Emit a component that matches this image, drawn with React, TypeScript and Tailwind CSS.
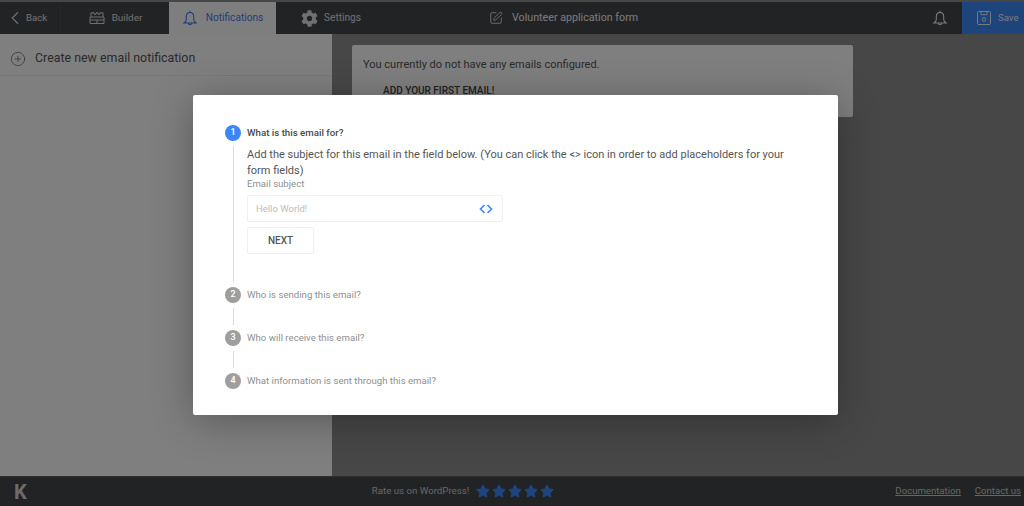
import { ChevronLeft, CirclePlus, SquarePen } from 'lucide-react';
import { FaCog, FaStar } from 'react-icons/fa';

function BuilderIcon() {
  return (
    <svg width="16" height="12" viewBox="0 0 16 12" fill="none" stroke="currentColor" strokeWidth="1">
      <path d="M1 5h14v6.5H1zM2 5V.8h3v1.4h2V.8h2v1.4h2V.8h3V5M1 8h14M8 8v3.5" />
    </svg>
  );
}

function BellIcon() {
  return (
    <svg width="14" height="16" viewBox="0 0 14 16" fill="none" stroke="currentColor" strokeWidth="1.1">
      <path d="M7 2.4c-2.6 0-3.7 2-3.7 4.4v2.6c0 1.6-1.3 2.8-2.4 3.6h12.2c-1.1-.8-2.4-2-2.4-3.6V6.8C10.7 4.4 9.6 2.4 7 2.4zM5.4 13.2a1.6 1.6 0 0 0 3.2 0M7 2.4V.8" />
    </svg>
  );
}

function SaveIcon() {
  return (
    <svg width="14" height="14" viewBox="0 0 14 14" fill="none" stroke="currentColor" strokeWidth="1">
      <path d="M1.5.5h11a1 1 0 0 1 1 1v11a1 1 0 0 1-1 1h-11a1 1 0 0 1-1-1v-11a1 1 0 0 1 1-1zM4 .5v3.2h6V.5" />
      <circle cx="7" cy="8.5" r="1.8" />
    </svg>
  );
}

function CodeIcon() {
  return (
    <svg width="14" height="10" viewBox="0 0 14 10" fill="none" stroke="currentColor" strokeWidth="1.6">
      <path d="M5.5 1 1.5 5l4 4M8.5 1l4 4-4 4" />
    </svg>
  );
}

function Step({ n, label, line }: { n: number; label: string; line?: boolean }) {
  return (
    <>
      <div className="flex items-center gap-[6px] h-[16px]">
        <div className="w-[16px] h-[16px] rounded-full bg-[#9e9e9e] text-white text-[9px] font-medium flex items-center justify-center">
          {n}
        </div>
        <span className="text-[9.65px] text-[#8f8f8f]">{label}</span>
      </div>
      {line && <div className="ml-[8px] w-px h-[17px] my-[5px] bg-[#dcdcdc]" />}
    </>
  );
}

export default function App() {
  return (
    <div className="relative w-[1024px] h-[506px] overflow-hidden flex flex-col bg-[#8e8e8e] font-['Roboto',sans-serif]">
      {/* Top bar */}
      <header className="h-[32px] mt-[2px] flex-shrink-0 bg-[#45474a] flex items-center relative">
        <div className="w-[61px] h-full flex items-center pl-[4px] text-[9.6px] text-[#e0e0e0] border-r border-[#4c4e51]">
          <ChevronLeft size={22} strokeWidth={1.2} />
          <span>Back</span>
        </div>
        <div className="w-[108px] h-full flex items-center justify-center gap-[7px] pl-[1px] text-[9.9px] text-[#e0e0e0]">
          <BuilderIcon />
          <span>Builder</span>
        </div>
        <div className="w-[107px] h-full bg-[#fdfdfd] flex justify-center items-center gap-[9px] pl-[1px] text-[10.15px] text-[#3f7ef0]">
          <BellIcon />
          <span>Notifications</span>
        </div>
        <div className="w-[108px] h-full flex items-center justify-center gap-[6px] pl-[2px] text-[10.1px] text-[#e0e0e0]">
          <FaCog size={17} />
          <span>Settings</span>
        </div>
        <div className="ml-[105px] flex items-center gap-[9px] text-[10.7px] text-[#f4f4f4]">
          <SquarePen size={14} strokeWidth={1.4} />
          <span>Volunteer application form</span>
        </div>
        <div className="ml-auto mr-[15px] text-[#f0f0f0]">
          <BellIcon />
        </div>
        <div className="w-[62px] h-full bg-[#3a8af8] flex items-center pl-[15px] gap-[7px] text-[9.6px] text-[#f0f4fa]">
          <SaveIcon />
          <span>Save</span>
        </div>
      </header>

      {/* Body */}
      <main className="flex-1 flex min-h-0">
        <aside className="w-[332px] bg-white">
          <div className="h-[42px] pt-[8px] border-b border-[#f0f0f0] flex items-center pl-[10px] gap-[9px] text-[#555] text-[12.4px]">
            <CirclePlus size={16} strokeWidth={1} />
            <span>Create new email notification</span>
          </div>
        </aside>
        <section className="flex-1 pl-[20px] pt-[11px]">
          <div className="w-[501px] h-[72px] rounded-[2px] bg-white pl-[11px] pt-[12px] text-[11px] text-[#555]">
            <p>You currently do not have any emails configured.</p>
            <p className="mt-[9px] ml-[20px] text-[10px] font-medium text-[#444]">ADD YOUR FIRST EMAIL!</p>
          </div>
        </section>
      </main>

      {/* Footer */}
      <footer className="h-[30px] flex-shrink-0 bg-[#45474a] border-t border-[#5a5a5a] flex items-center relative text-[9.7px] text-[#cccccc]">
        <span className="ml-[14px] text-[20px] font-bold leading-none text-[#d8d8d8]">K</span>
        <div className="ml-[345px] flex items-center">
          <span className="mr-[7px]">Rate us on WordPress!</span>
          <div className="flex gap-[2px] text-[#3a8af8]">
            <FaStar size={14} />
            <FaStar size={14} />
            <FaStar size={14} />
            <FaStar size={14} />
            <FaStar size={14} />
          </div>
        </div>
        <div className="ml-auto mr-[3px] flex gap-[14px] underline text-[9.6px]">
          <span>Documentation</span>
          <span>Contact us</span>
        </div>
      </footer>

      {/* Overlay */}
      <div className="absolute inset-0 bg-black/50" />

      {/* Modal */}
      <div className="absolute left-[193px] top-[95px] w-[645px] h-[320px] rounded-[2px] bg-white shadow-[0_6px_40px_rgba(0,0,0,0.3)] pl-[32px] pt-[30px]">
        <div className="flex items-center gap-[6px] h-[16px]">
          <div className="w-[16px] h-[16px] rounded-full bg-[#3b87f7] text-white text-[9px] font-medium flex items-center justify-center">
            1
          </div>
          <span className="text-[9.7px] font-medium text-[#4a4a4a]">What is this email for?</span>
        </div>
        <div className="flex mt-[5px]">
          <div className="ml-[8px] w-px h-[136px] bg-[#dcdcdc]" />
          <div className="ml-[13px] w-[560px]">
            <p className="mt-[1px] text-[11px] leading-[16px] text-[#555]">
              Add the subject for this email in the field below. (You can click the &lt;&gt; icon in order to add placeholders for your form fields)
            </p>
            <div className="-mt-[1px] text-[9.6px] leading-[11px] text-[#8f8f8f]">Email subject</div>
            <div className="mt-[6px] w-[256px] h-[27px] border border-[#f0f0f0] rounded-[2px] flex items-center pl-[8px] pr-[9px] text-[9.5px] text-[#bcbcbc]">
              <span className="pt-[1px]">Hello World!</span>
              <div className="ml-auto text-[#3b87f7]">
                <CodeIcon />
              </div>
            </div>
            <div className="mt-[5px] w-[67px] h-[27px] border border-[#f0f0f0] rounded-[2px] flex items-center justify-center text-[10px] font-medium text-[#555]">
              NEXT
            </div>
          </div>
        </div>
        <div className="mt-[5px]">
          <Step n={2} label="Who is sending this email?" line />
          <Step n={3} label="Who will receive this email?" line />
          <Step n={4} label="What information is sent through this email?" />
        </div>
      </div>
    </div>
  );
}
